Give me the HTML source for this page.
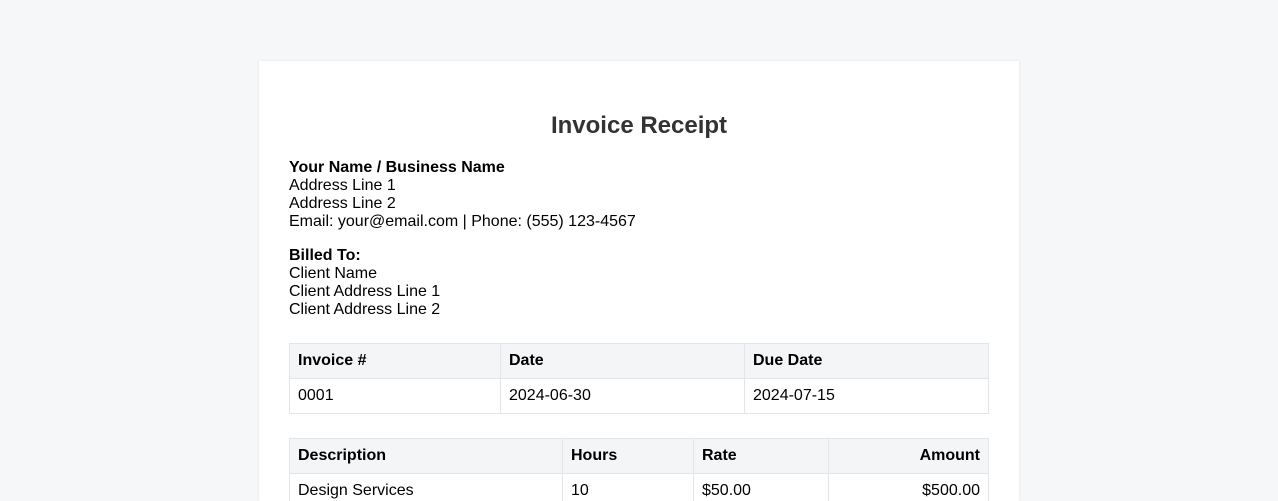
<!DOCTYPE html>
<html style="width:1278px;height:501px;overflow:hidden"><head><style>
*{box-sizing:border-box}
html,body{margin:0;width:1278px;height:501px;overflow:hidden}
body{background:#f6f7f9;font-family:"Liberation Sans",Arial,sans-serif;font-size:16px;line-height:18px;color:#000;position:relative}
.card{position:absolute;left:259px;top:61px;width:760px;height:440px;background:#fff;box-shadow:0 0 3px rgba(0,0,0,0.08);padding:0 30px}
h1{margin:0;position:absolute;left:0;right:0;top:51px;text-align:center;font-size:24px;line-height:28px;color:#333;font-weight:bold}
.blk{position:absolute;left:30px}
table{position:absolute;left:30px;width:700px;border-collapse:collapse}
td,th{border:1px solid #e3e5e8;height:35px;padding:0 8px;text-align:left;font-size:16px}
th{background:#f4f5f7;font-weight:bold}
.r{text-align:right}
</style></head><body>
<div class="card">
<h1>Invoice Receipt</h1>
<div class="blk" style="top:98px"><b>Your Name / Business Name</b><br>Address Line 1<br>Address Line 2<br>Email: your@email.com | Phone: (555) 123-4567</div>
<div class="blk" style="top:186px"><b>Billed To:</b><br>Client Name<br>Client Address Line 1<br>Client Address Line 2</div>
<table style="top:282px">
<tr><th style="width:211px">Invoice #</th><th style="width:244px">Date</th><th>Due Date</th></tr>
<tr><td>0001</td><td>2024-06-30</td><td>2024-07-15</td></tr>
</table>
<table style="top:377px">
<tr><th style="width:273px">Description</th><th style="width:131px">Hours</th><th style="width:135px">Rate</th><th class="r">Amount</th></tr>
<tr><td>Design Services</td><td>10</td><td>$50.00</td><td class="r">$500.00</td></tr>
</table>
</div>
</body></html>
